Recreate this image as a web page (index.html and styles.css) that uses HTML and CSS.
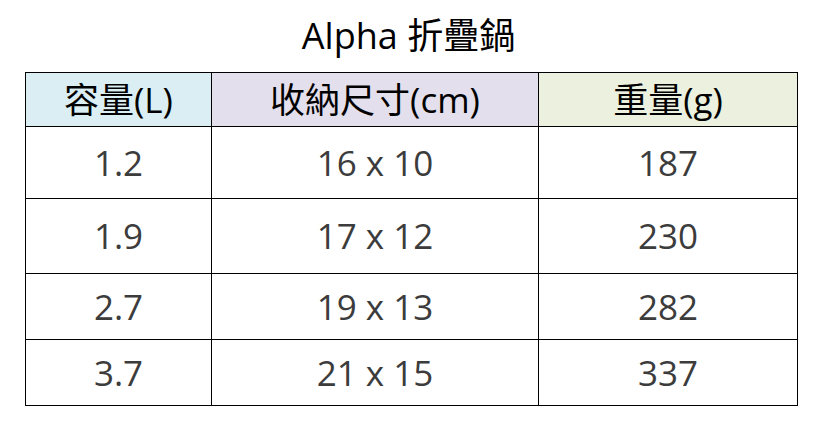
FILE: index.html
```html
<!DOCTYPE html>
<html lang="zh-Hant">
<head>
<meta charset="utf-8">
<link rel="stylesheet" href="styles.css">
</head>
<body>
<div class="page">
  <h1 class="title">Alpha 折疊鍋</h1>
  <table class="spec">
    <colgroup>
      <col class="c1"><col class="c2"><col class="c3">
    </colgroup>
    <thead>
      <tr>
        <th class="h-blue">容量(L)</th>
        <th class="h-purple">收納尺寸(cm)</th>
        <th class="h-green">重量(g)</th>
      </tr>
    </thead>
    <tbody>
      <tr class="r1"><td>1.2</td><td>16 x 10</td><td>187</td></tr>
      <tr class="r2"><td>1.9</td><td>17 x 12</td><td>230</td></tr>
      <tr class="r3"><td>2.7</td><td>19 x 13</td><td>282</td></tr>
      <tr class="r4"><td>3.7</td><td>21 x 15</td><td>337</td></tr>
    </tbody>
  </table>
</div>
</body>
</html>
```

FILE: styles.css
```css
html, body {
  margin: 0;
  padding: 0;
  background: #ffffff;
}
.page {
  width: 817px;
  height: 423px;
  padding-top: 14px;
  box-sizing: border-box;
  font-family: "Open Sans", "Noto Sans CJK TC", sans-serif;
}
.title {
  margin: 0;
  height: 58px;
  font-size: 36px;
  font-weight: normal;
  line-height: 44px;
  text-align: center;
  color: #000;
}
.spec {
  margin-left: 25px;
  width: 772px;
  border-collapse: collapse;
  table-layout: fixed;
}
.c1 { width: 186px; }
.c2 { width: 327px; }
.c3 { width: 259px; }
.spec th, .spec td {
  border: 1px solid #000;
  padding: 0;
  text-align: center;
  vertical-align: middle;
  font-size: 35px;
  font-weight: normal;
  line-height: 40px;
}
.spec th {
  height: 53px;
  color: #000;
}
.spec td {
  color: #3c3c3c;
}
.h-blue { background: #daeef3; }
.h-purple { background: #e4dfec; }
.h-green { background: #ebf1de; }
.r1 td { height: 71px; }
.r2 td { height: 74px; }
.r3 td { height: 65px; }
.r4 td { height: 65px; }
```
